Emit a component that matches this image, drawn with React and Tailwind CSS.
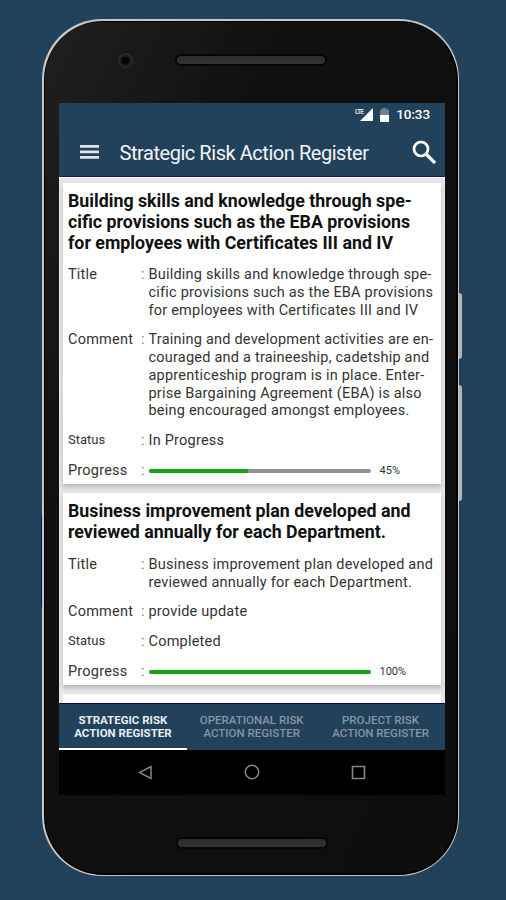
const actions = [
	{
		heading: ["Building skills and knowledge through spe-", "cific provisions such as the EBA provisions", "for employees with Certificates III and IV"],
		title: ["Building skills and knowledge through spe-", "cific provisions such as the EBA provisions", "for employees with Certificates III and IV"],
		comment: [
			"Training and development activities are en-",
			"couraged and a traineeship, cadetship and",
			"apprenticeship program is in place. Enter-",
			"prise Bargaining Agreement (EBA) is also",
			"being encouraged amongst employees.",
		],
		status: "In Progress",
		progress: 45,
	},
	{
		heading: ["Business improvement plan developed and", "reviewed annually for each Department."],
		title: ["Business improvement plan developed and", "reviewed annually for each Department."],
		comment: ["provide update"],
		status: "Completed",
		progress: 100,
	},
];

const tabs = ["STRATEGIC RISK", "OPERATIONAL RISK", "PROJECT RISK"];

const Lines = ({ lines }) =>
	lines.map((line) => (
		<span key={line} className="block whitespace-nowrap">
			{line}
		</span>
	));

const Row = ({ label, small, children }) => (
	<div className="flex text-[14.5px] leading-[17.75px] tracking-[0.22px] text-[#333]">
		<div className={small ? "w-[73px] text-[13px] leading-[16px] tracking-normal" : "w-[73px]"}>{label}</div>
		<div className="w-[7.5px] text-[#777]">:</div>
		<div className="flex-1">{children}</div>
	</div>
);

const Card = ({ item }) => (
	<div className="bg-white pl-[5px] pt-[7px] pb-[4.5px] shadow-[0_3px_4px_#b9b9b9]">
		<h2 className="mb-[13.5px] text-[17.8px] leading-[21px] font-bold text-[#111]">
			<Lines lines={item.heading} />
		</h2>
		<div className="flex flex-col gap-3">
			<Row label="Title">
				<Lines lines={item.title} />
			</Row>
			<Row label="Comment">
				<Lines lines={item.comment} />
			</Row>
			<Row label="Status" small>
				{item.status}
			</Row>
			<Row label="Progress">
				<div className="flex h-[18px] items-center">
					<div className="h-1 w-[222px] overflow-hidden rounded-full bg-[#929292]">
						<div className="h-full bg-[#12a50f]" style={{ width: `${item.progress}%` }} />
					</div>
					<span className="ml-[9px] text-[11px] tracking-normal">{item.progress}%</span>
				</div>
			</Row>
		</div>
	</div>
);

const Speaker = () => (
	<div className="h-3 w-[152px] rounded-full border-2 border-[#050505] bg-linear-to-b from-[#2c2c2c] to-[#333]" />
);

const App = () => {
	return (
		<div className="relative h-[900px] w-[506px] overflow-hidden bg-[#22415a] pt-[19px] pl-[42px] font-[Roboto,sans-serif]">
			{/* side buttons */}
			<div className="absolute top-[293px] left-[456px] h-[66px] w-[6px] rounded-[5px] bg-[#b4b4b2]" />
			<div className="absolute top-[385px] left-[456px] h-[116px] w-[6px] rounded-[5px] bg-[#b4b4b2]" />
			<div className="absolute top-[515px] left-[41px] h-[92px] w-[3px] bg-[#0b1150]" />
			<div className="relative h-[857px] w-[417px] rounded-[60px] bg-[#c4c6c8] p-[1.5px]">
				<div className="h-full rounded-[59px] bg-black p-[1.5px]">
					<div className="flex h-full flex-col rounded-[57px] bg-linear-to-br from-[#202020] via-[#101010] via-30% to-[#0e0e0e] pl-[13.5px]">
						<div className="flex h-[80.5px] items-center pb-1">
							<div className="ml-[59px] flex size-[15px] items-center justify-center rounded-full border-2 border-[#29292c] bg-[#18181a]">
								<div className="size-[7px] rounded-full bg-[#050505]" />
							</div>
							<div className="ml-[42px]">
								<Speaker />
							</div>
						</div>
						<div className="flex h-[692.5px] w-[386.5px] flex-col bg-[#22415a]">
							<div className="flex h-6 items-center justify-end pr-[15px] text-white">
								<svg className="mr-[7px] h-[14px] w-[18px]" viewBox="0 0 18 14">
									<path d="M18 0v13H5z" fill="#fff" />
									<text x="0" y="5.5" fontSize="6.5" fontWeight="bold" fill="#dce2e7" textLength="9">
										LTE
									</text>
								</svg>
								<svg className="mr-[7px] h-[14px] w-[9px]" viewBox="0 0 9 14">
									<path d="M2.5 0h4v1.5H9V7H0V1.5h2.5z" fill="#6c8293" />
									<path d="M0 7h9v7H0z" fill="#fff" />
								</svg>
								<span className="text-[13.5px] font-medium tracking-[-0.1px]">10:33</span>
							</div>
							<div className="flex h-[50px] items-center border-b border-[#0a2252] pt-[3px] text-[#f2f4f6]">
								<svg className="ml-[21px] -mt-0.5 h-[14px] w-[19px]" viewBox="0 0 19 14" fill="#e0e2ec">
									<path d="M0 0h19v2.8H0zM0 5.5h19v2.8H0zM0 11h19v2.8H0z" />
								</svg>
								<h1 className="ml-[21px] whitespace-nowrap text-[20px] tracking-[-0.45px]">Strategic Risk Action Register</h1>
								<svg className="mr-[9px] -mt-0.5 ml-auto size-6" viewBox="0 0 24 24" fill="none" stroke="#fff" strokeWidth="2.7">
									<circle cx="9" cy="9" r="7" />
									<path d="m14 14 9 9" strokeWidth="3.2" />
								</svg>
							</div>
							<div className="flex min-h-0 flex-1 flex-col gap-[9px] overflow-hidden border-b border-[#080848] bg-[#e6e6e6] px-[4.5px] pt-[6px] shadow-[inset_0_1px_0_#fff]">
								{actions.map((item) => (
									<Card key={item.status} item={item} />
								))}
								<div className="h-5 shrink-0 bg-white" />
							</div>
							<div className="flex h-[45.5px] text-center text-[11.5px] leading-[13.5px] font-medium">
								{tabs.map((tab, i) => (
									<div
										key={tab}
										className={
											i === 0
												? "flex-1 border-b-2 border-white pt-[9.5px] font-bold text-[#e9edf0]"
												: "flex-1 pt-[9.5px] text-[#8796a3]"
										}
									>
										<div>{tab}</div>
										<div>ACTION REGISTER</div>
									</div>
								))}
							</div>
							<div className="flex h-[45.5px] items-center bg-black">
								<svg className="ml-[79px] size-[15px]" viewBox="0 0 15 15" fill="none" stroke="#858585" strokeWidth="1.5">
									<path d="M13 1.5v12L1.5 7.5z" />
								</svg>
								<svg className="ml-[91px] size-4" viewBox="0 0 16 16" fill="none" stroke="#858585" strokeWidth="1.5">
									<circle cx="8" cy="8" r="6.7" />
								</svg>
								<svg className="ml-[91px] size-[15px]" viewBox="0 0 15 15" fill="none" stroke="#858585" strokeWidth="1.6">
									<path d="M1.5 1.5h12v12h-12z" />
								</svg>
							</div>
						</div>
						<div className="mt-[42px] ml-[117px]">
							<Speaker />
						</div>
					</div>
				</div>
			</div>
		</div>
	);
};

export default App;
